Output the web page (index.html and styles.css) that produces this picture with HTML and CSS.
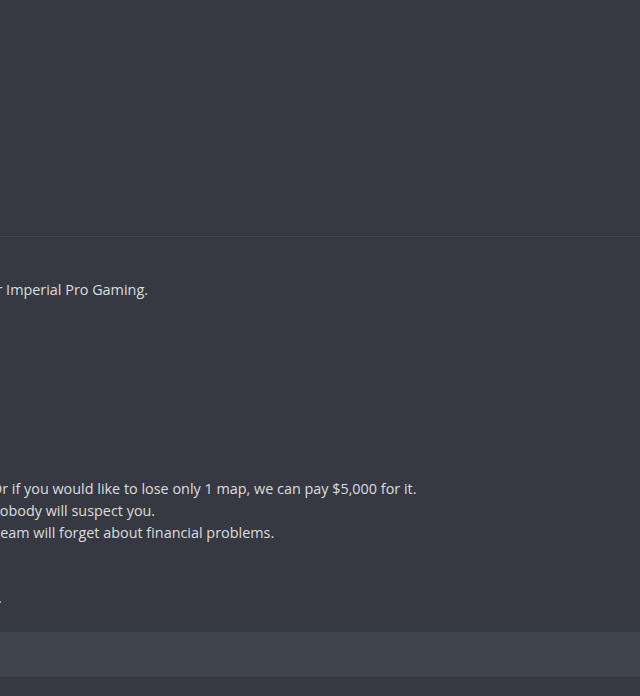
FILE: index.html
```html
<!DOCTYPE html>
<html>
<head>
<meta charset="utf-8">
<link rel="stylesheet" href="styles.css">
</head>
<body>
<div class="chat">
  <div class="top"></div>
  <div class="divider"></div>
  <div class="messages">
    <div class="msg msg-first">
      <div class="line ind-for">for Imperial Pro Gaming.</div>
    </div>
    <div class="msg msg-second">
      <div class="line ind-or">Or if you would like to lose only 1 map, we can pay $5,000 for it.</div>
      <div class="line ind-nobody">Nobody will suspect you.</div>
      <div class="line ind-team">team will forget about financial problems.</div>
    </div>
    <div class="msg msg-third">
      <div class="line ind-dot">.</div>
    </div>
  </div>
  <div class="composer"></div>
</div>
</body>
</html>
```
FILE: styles.css
```css
html, body {
  margin: 0;
  padding: 0;
  background: #363942;
  overflow: hidden;
}
.chat {
  width: 640px;
  height: 696px;
  display: flex;
  flex-direction: column;
  font-family: "Open Sans", "Noto Sans", sans-serif;
  font-size: 14.4px;
  line-height: 22px;
  color: #dcddde;
}
.top {
  height: 236px;
  flex: none;
}
.divider {
  height: 1px;
  background: #40434b;
  flex: none;
}
.messages {
  height: 395px;
  flex: none;
  overflow: hidden;
}
.line {
  white-space: nowrap;
}
.msg-first { margin-top: 42px; }
.msg-second { margin-top: 177px; }
.msg-third { margin-top: 43px; }
.ind-for { margin-left: -17px; }
.ind-or { margin-left: -9px; }
.ind-nobody { margin-left: -11px; }
.ind-team { margin-left: -5px; }
.ind-dot { margin-left: -2px; }
.composer {
  height: 45px;
  background: #40444b;
  flex: none;
}
```
